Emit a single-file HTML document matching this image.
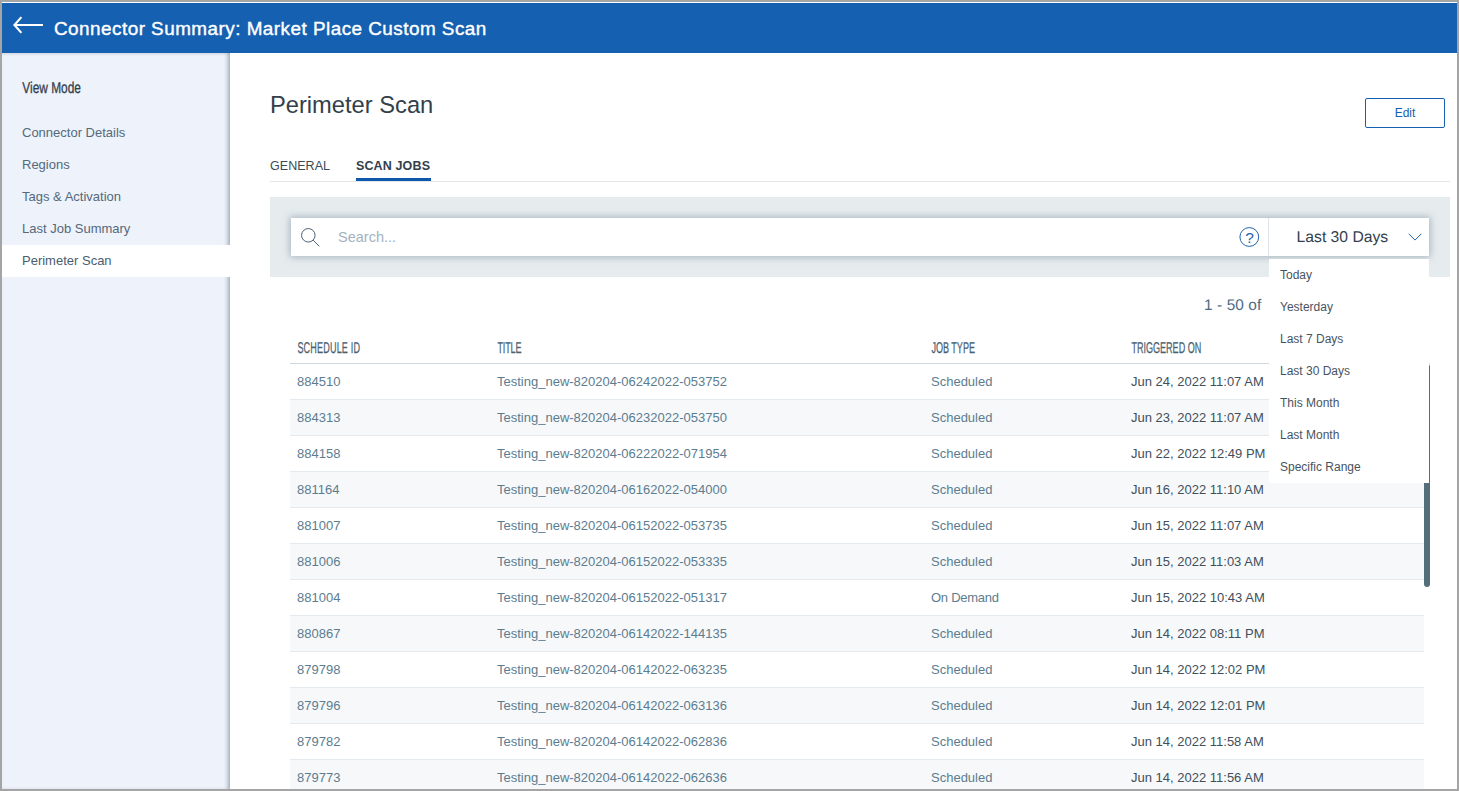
<!DOCTYPE html>
<html lang="en">
<head>
<meta charset="utf-8">
<title>Connector Summary: Market Place Custom Scan</title>
<style>
*{box-sizing:border-box;margin:0;padding:0}
html,body{width:1459px;height:791px;overflow:hidden;background:#a5a5a5}
body{font-family:"Liberation Sans",sans-serif;color:#3a4a58;position:relative}
#app{position:absolute;left:2px;top:2px;width:1455px;height:787px;background:#fff;overflow:hidden}
.abs{position:absolute;white-space:nowrap}
/* header */
#hdr{position:absolute;left:0;top:1px;width:1455px;height:50px;background:#1560b0}
#hdr .ttl{position:absolute;left:52px;top:1px;height:50px;line-height:50px;font-size:18.9px;letter-spacing:.47px;color:#fff;white-space:nowrap;-webkit-text-stroke:0.4px #fff}
#hdr svg{position:absolute;left:10px;top:11px}
/* sidebar */
#side{position:absolute;left:0;top:51px;width:228px;height:736px;background:#eef2fa;box-shadow:inset -4px 0 4px -2px rgba(70,80,92,.45),inset 0 3px 3px -2px rgba(70,80,92,.12)}
#side .vm{position:absolute;left:20px;top:26.4px;font-size:15.8px;color:#33414e;-webkit-text-stroke:.3px #33414e;text-rendering:geometricPrecision;transform:translateX(.3px) scaleX(.753);transform-origin:0 50%;white-space:nowrap;line-height:20px}
#side .it{position:absolute;left:0;width:228px;height:32px;line-height:32px;padding-left:20px;font-size:13px;color:#54697a;white-space:nowrap}
#side .it.on{background:#fff;color:#4a5e6e}
/* main */
h1{position:absolute;left:268px;top:88px;font-size:23.7px;font-weight:400;color:#333f4a;line-height:30px;white-space:nowrap}
#edit{position:absolute;left:1363px;top:96px;width:80px;height:30px;border:1px solid #1560b0;border-radius:2px;color:#1560b0;font-size:12px;line-height:28px;text-align:center;background:#fff}
.tab{position:absolute;top:156px;font-size:12.5px;line-height:16px;letter-spacing:.05px;color:#3a4a58;white-space:nowrap}
.tab.on{font-weight:700;color:#33404c;letter-spacing:.13px}
#tabline{position:absolute;left:268px;top:179px;width:1180px;height:1px;background:#e3e7ea}
#tabul{position:absolute;left:354px;top:176px;width:75px;height:3px;background:#0d58ad}
#band{position:absolute;left:268px;top:195px;width:1180px;height:80px;background:#e6ebee}
#sbox{position:absolute;left:289px;top:216px;width:1138px;height:38px;background:#fff;box-shadow:0 0 7px 1px rgba(110,135,150,.55)}
#sbox .ph{position:absolute;left:47px;top:0;line-height:38px;font-size:14.5px;color:#a3b3bf}
#sbox .div{position:absolute;left:977px;top:0;width:1px;height:38px;background:#dfe5e9}
#sbox .sel{position:absolute;left:1005.6px;top:0;text-rendering:geometricPrecision;line-height:39.8px;font-size:15.7px;color:#33414e;white-space:nowrap}
#dd{position:absolute;left:1267px;top:257px;width:160px;height:224px;background:#fff}
#dd div{position:absolute;left:11px;font-size:12px;line-height:32px;height:32px;color:#47545f;white-space:nowrap}
#cnt{position:absolute;left:1202px;top:293.6px;font-size:15.4px;letter-spacing:.1px;text-rendering:geometricPrecision;line-height:20px;color:#4d6a86;white-space:nowrap}
/* table */
.th{position:absolute;top:338px;font-size:15.6px;line-height:18px;color:#4a5f70;-webkit-text-stroke:.28px #4a5f70;text-rendering:geometricPrecision;transform:translateX(.4px) scaleX(.58);transform-origin:0 50%;white-space:nowrap}
#hline{position:absolute;left:288px;top:361px;width:1140px;height:1px;background:#cfd8de}
.row{position:absolute;left:288px;width:1134px;height:36px;border-bottom:1px solid #e4e9ed;font-size:13px;line-height:36px;white-space:nowrap}
.row.alt{background:#f6f8fa}
.row span{position:absolute;top:0}
.c1{left:7px;color:#5c7d8f}.c2{left:207px;color:#5c7d8f}.c3{left:641px;color:#5c7d8f}.c4{left:841px;color:#424f5b}
#thumb{position:absolute;left:1422px;top:362px;width:6px;height:223px;background:#546e7a;border-radius:3px}
</style>
</head>
<body>
<div id="app">
  <div id="hdr">
    <svg width="34" height="24" viewBox="0 0 34 24"><path d="M9.4 3.1 L2.4 11 L9.4 18.9 M2.4 11 H31" fill="none" stroke="#fff" stroke-width="2.1" stroke-linecap="butt" stroke-linejoin="miter"/></svg>
    <div class="ttl">Connector Summary: Market Place Custom Scan</div>
  </div>

  <div id="side">
    <div class="vm">View Mode</div>
    <div class="it" style="top:64px">Connector Details</div>
    <div class="it" style="top:96px">Regions</div>
    <div class="it" style="top:128px">Tags &amp; Activation</div>
    <div class="it" style="top:160px">Last Job Summary</div>
    <div class="it on" style="top:192px">Perimeter Scan</div>
  </div>

  <h1>Perimeter Scan</h1>
  <div id="edit">Edit</div>

  <div class="tab" style="left:268px">GENERAL</div>
  <div class="tab on" style="left:354px">SCAN JOBS</div>
  <div id="tabline"></div>
  <div id="tabul"></div>

  <div id="band"></div>
  <div id="sbox">
    <svg class="abs" style="left:8.4px;top:8px" width="22" height="22" viewBox="0 0 22 22"><circle cx="9.3" cy="9.3" r="6.75" fill="none" stroke="#4a6175" stroke-width="1"/><path d="M14.1 14.1 L20.3 20.3" stroke="#4a6175" stroke-width="1" fill="none"/></svg>
    <div class="ph">Search...</div>
    <svg class="abs" style="left:948px;top:9px;overflow:visible" width="20" height="20" viewBox="0 0 20 20"><circle cx="10.3" cy="10" r="9.4" fill="none" stroke="#1f62ad" stroke-width="1"/><text x="10.5" y="15.9" font-family="Liberation Sans, sans-serif" font-size="15.5" text-anchor="middle" fill="#1f62ad">?</text></svg>
    <div class="div"></div>
    <div class="sel">Last 30 Days</div>
    <svg class="abs" style="left:1116.5px;top:15.3px" width="14" height="9" viewBox="0 0 14 9"><path d="M0.7 0.8 L7 7.1 L13.3 0.8" fill="none" stroke="#1f62ad" stroke-width="1"/></svg>
  </div>

  <div id="cnt">1 - 50 of</div>

  <div class="th" style="left:295px;letter-spacing:.3px">SCHEDULE ID</div>
  <div class="th" style="left:495px;letter-spacing:-.2px">TITLE</div>
  <div class="th" style="left:929px">JOB TYPE</div>
  <div class="th" style="left:1129px">TRIGGERED ON</div>
  <div id="hline"></div>

  <div class="row" style="top:362px"><span class="c1">884510</span><span class="c2">Testing_new-820204-06242022-053752</span><span class="c3">Scheduled</span><span class="c4">Jun 24, 2022 11:07 AM</span></div>
  <div class="row alt" style="top:398px"><span class="c1">884313</span><span class="c2">Testing_new-820204-06232022-053750</span><span class="c3">Scheduled</span><span class="c4">Jun 23, 2022 11:07 AM</span></div>
  <div class="row" style="top:434px"><span class="c1">884158</span><span class="c2">Testing_new-820204-06222022-071954</span><span class="c3">Scheduled</span><span class="c4">Jun 22, 2022 12:49 PM</span></div>
  <div class="row alt" style="top:470px"><span class="c1">881164</span><span class="c2">Testing_new-820204-06162022-054000</span><span class="c3">Scheduled</span><span class="c4">Jun 16, 2022 11:10 AM</span></div>
  <div class="row" style="top:506px"><span class="c1">881007</span><span class="c2">Testing_new-820204-06152022-053735</span><span class="c3">Scheduled</span><span class="c4">Jun 15, 2022 11:07 AM</span></div>
  <div class="row alt" style="top:542px"><span class="c1">881006</span><span class="c2">Testing_new-820204-06152022-053335</span><span class="c3">Scheduled</span><span class="c4">Jun 15, 2022 11:03 AM</span></div>
  <div class="row" style="top:578px"><span class="c1">881004</span><span class="c2">Testing_new-820204-06152022-051317</span><span class="c3" style="letter-spacing:-.27px">On Demand</span><span class="c4">Jun 15, 2022 10:43 AM</span></div>
  <div class="row alt" style="top:614px"><span class="c1">880867</span><span class="c2">Testing_new-820204-06142022-144135</span><span class="c3">Scheduled</span><span class="c4">Jun 14, 2022 08:11 PM</span></div>
  <div class="row" style="top:650px"><span class="c1">879798</span><span class="c2">Testing_new-820204-06142022-063235</span><span class="c3">Scheduled</span><span class="c4">Jun 14, 2022 12:02 PM</span></div>
  <div class="row alt" style="top:686px"><span class="c1">879796</span><span class="c2">Testing_new-820204-06142022-063136</span><span class="c3">Scheduled</span><span class="c4">Jun 14, 2022 12:01 PM</span></div>
  <div class="row" style="top:722px"><span class="c1">879782</span><span class="c2">Testing_new-820204-06142022-062836</span><span class="c3">Scheduled</span><span class="c4">Jun 14, 2022 11:58 AM</span></div>
  <div class="row alt" style="top:758px"><span class="c1">879773</span><span class="c2">Testing_new-820204-06142022-062636</span><span class="c3">Scheduled</span><span class="c4">Jun 14, 2022 11:56 AM</span></div>

  <div id="thumb"></div>

  <div id="dd">
    <div style="top:0">Today</div>
    <div style="top:32px">Yesterday</div>
    <div style="top:64px">Last 7 Days</div>
    <div style="top:96px">Last 30 Days</div>
    <div style="top:128px">This Month</div>
    <div style="top:160px">Last Month</div>
    <div style="top:192px">Specific Range</div>
  </div>
</div>
</body>
</html>
